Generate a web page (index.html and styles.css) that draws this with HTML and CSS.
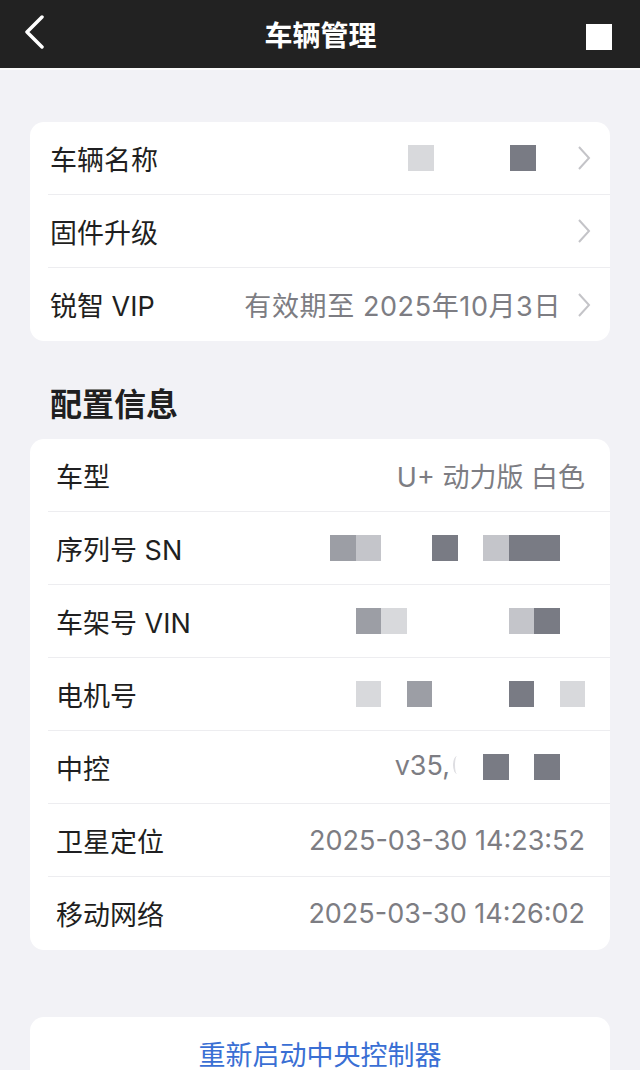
FILE: index.html
```html
<!DOCTYPE html>
<html lang="zh-CN">

<head>
    <meta charset="UTF-8">
    <meta name="viewport" content="width=device-width, initial-scale=1.0">
    <title>车辆管理</title>
    <link rel="stylesheet" href="styles.css">
</head>

<body>

    <header class="navbar">
        <svg class="back" width="24" height="36" viewBox="0 0 24 36">
            <path d="M19 2 L4 17 L19 32" fill="none" stroke="#fff" stroke-width="3.5"
                stroke-linecap="round" stroke-linejoin="round" />
        </svg>
        <h1>车辆管理</h1>
        <span class="stop"></span>
    </header>

    <main class="page">

        <section class="group">
            <div class="row">
                <span class="label">车辆名称</span>
                <div class="value mosaic">
                    <i class="c1"></i><i></i><i></i><i></i><i class="c4"></i><i></i>
                </div>
                <svg class="arrow" width="14" height="24" viewBox="0 0 14 24">
                    <path d="M2 1 L12 12 L2 23" fill="none" stroke="#c4c4c8" stroke-width="2" />
                </svg>
            </div>
            <div class="row">
                <span class="label">固件升级</span>
                <div class="value"></div>
                <svg class="arrow" width="14" height="24" viewBox="0 0 14 24">
                    <path d="M2 1 L12 12 L2 23" fill="none" stroke="#c4c4c8" stroke-width="2" />
                </svg>
            </div>
            <div class="row">
                <span class="label">锐智 VIP</span>
                <div class="value vip">有效期至 2025年10月3日</div>
                <svg class="arrow" width="14" height="24" viewBox="0 0 14 24">
                    <path d="M2 1 L12 12 L2 23" fill="none" stroke="#c4c4c8" stroke-width="2" />
                </svg>
            </div>
        </section>

        <h2 class="section-title">配置信息</h2>

        <section class="group info">
            <div class="row">
                <span class="label">车型</span>
                <div class="value">U+ 动力版 白色</div>
            </div>
            <div class="row">
                <span class="label">序列号 SN</span>
                <div class="value mosaic">
                    <i class="c2"></i><i class="c3"></i><i></i><i></i><i class="c4"></i><i></i><i class="c3"></i><i class="c4"></i><i class="c4"></i><i></i>
                </div>
            </div>
            <div class="row">
                <span class="label">车架号 VIN</span>
                <div class="value mosaic">
                    <i class="c2"></i><i class="c1"></i><i></i><i></i><i></i><i></i><i class="c3"></i><i class="c4"></i><i></i>
                </div>
            </div>
            <div class="row">
                <span class="label">电机号</span>
                <div class="value mosaic">
                    <i class="c1"></i><i></i><i class="c2"></i><i></i><i></i><i></i><i class="c4"></i><i></i><i class="c1"></i>
                </div>
            </div>
            <div class="row">
                <span class="label">中控</span>
                <div class="value mosaic">
                    <span class="ver">v35,</span><i class="smudge"></i><i class="gap"></i><i class="c4"></i><i></i><i class="c4"></i><i></i>
                </div>
            </div>
            <div class="row">
                <span class="label">卫星定位</span>
                <div class="value">2025-03-30 14:23:52</div>
            </div>
            <div class="row">
                <span class="label">移动网络</span>
                <div class="value">2025-03-30 14:26:02</div>
            </div>
        </section>

        <section class="group action">
            <a href="#" class="restart">重新启动中央控制器</a>
        </section>

    </main>

</body>

</html>
```

FILE: styles.css
```css
body {
    font-family: Inter, "Noto Sans CJK SC", sans-serif;
    margin: 0;
    padding: 0;
    background: #f2f2f6;
    color: #1f1f21;
}

.navbar {
    height: 68px;
    background: #222222;
    border-bottom: 2px solid #fafafa;
    display: flex;
    align-items: center;
    justify-content: space-between;
    padding: 0 28px 0 23px;
}

.navbar h1 {
    margin: 0;
    color: #fff;
    font-size: 28px;
    font-weight: 600;
    font-family: "Noto Sans CJK SC", sans-serif;
    padding-left: 8px;
}

.back {
    display: block;
    margin-top: -2px;
}

.stop {
    width: 26px;
    height: 26px;
    background: #fff;
    margin-top: 6px;
}

.page {
    padding: 52px 30px 0;
}

.group {
    background: #fff;
    border-radius: 14px;
    overflow: hidden;
}

.row {
    height: 73px;
    margin-left: 18px;
    padding: 0 19px 0 2px;
    display: flex;
    align-items: center;
    border-bottom: 1px solid #ededf0;
    box-sizing: border-box;
}

.row:last-child {
    border-bottom: none;
}

.label {
    font-size: 27px;
    white-space: nowrap;
}

.value {
    flex: 1;
    display: flex;
    justify-content: flex-end;
    align-items: center;
    color: #7d7d83;
    font-size: 27px;
    white-space: nowrap;
}

.vip {
    letter-spacing: 0.6px;
}

.arrow {
    margin-left: 16px;
    display: block;
}

.mosaic i {
    display: block;
    width: 25.5px;
    height: 25.5px;
}

.mosaic .c1 { background: #d8d9dc; }
.mosaic .c2 { background: #9c9ea5; }
.mosaic .c3 { background: #c4c5ca; }
.mosaic .c4 { background: #797b84; }
.mosaic .gap { width: 22px; }

.mosaic .smudge {
    width: 6px;
    height: 18px;
    margin-left: 3px;
    margin-top: -4px;
    border-left: 2px solid #dedee2;
    border-radius: 50% 0 0 50%;
}

.ver {
    margin-top: -4px;
}

.section-title {
    margin: 44px 0 20px 20px;
    font-size: 32px;
    line-height: 34px;
    font-weight: 700;
    font-family: "Noto Sans CJK SC", sans-serif;
}

.info .row {
    padding: 0 25px 0 8px;
}

.action {
    margin-top: 67px;
    height: 73px;
    display: flex;
    align-items: center;
    justify-content: center;
}

.restart {
    color: #3a6fd4;
    font-size: 27px;
    text-decoration: none;
}
```
